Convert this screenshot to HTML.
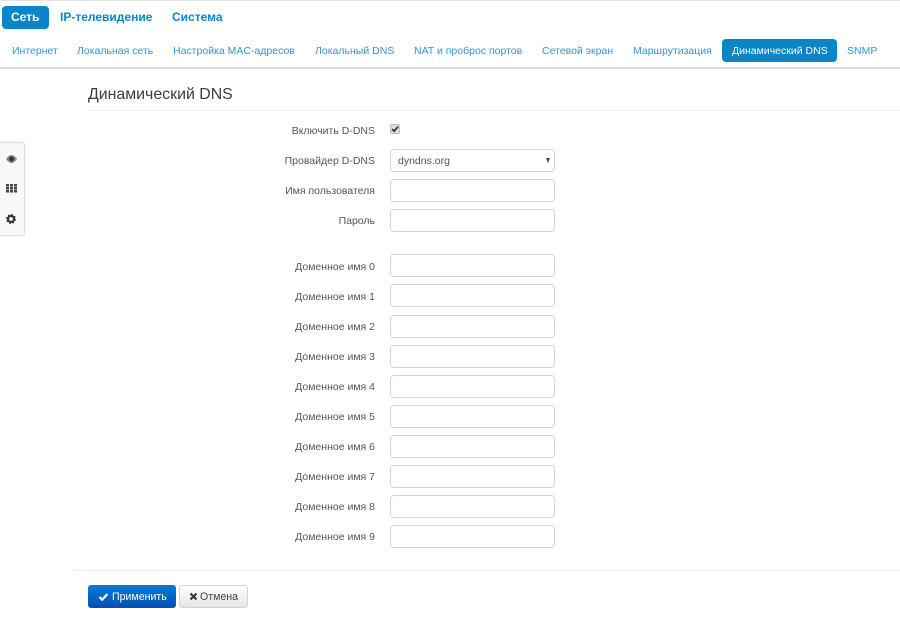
<!DOCTYPE html>
<html><head><meta charset="utf-8">
<style>
html,body{margin:0;padding:0;background:#fff;width:900px;height:626px;overflow:hidden;font-family:"Liberation Sans",sans-serif}
.a{position:absolute;white-space:nowrap}
.top{top:2px;height:22px;line-height:30px;font-size:12px;font-weight:bold;color:#0a85c7}
.sub{top:39px;line-height:25px;font-size:10.5px;color:#3a93cd}
.lb{left:230px;width:145px;text-align:right;font-size:10.5px;color:#555;line-height:20px}
.in{left:390px;width:163px;height:21px;border:1px solid #d6d6d6;border-radius:4px;background:#fff}
</style></head><body>
<div class="a" style="left:0;top:0;width:900px;height:1px;background:#e4e4e4"></div>
<div class="a" style="left:2px;top:6px;width:47px;height:23px;background:#0a85c7;border-radius:4px"></div>
<div class="a top" style="left:11px;top:2px;color:#fff">Сеть</div>
<div class="a top" style="left:60px">IP-телевидение</div>
<div class="a top" style="left:172px">Система</div>

<div class="a sub" style="left:12px">Интернет</div>
<div class="a sub" style="left:77px">Локальная сеть</div>
<div class="a sub" style="left:173px">Настройка MAC-адресов</div>
<div class="a sub" style="left:315px">Локальный DNS</div>
<div class="a sub" style="left:414px">NAT и проброс портов</div>
<div class="a sub" style="left:542px">Сетевой экран</div>
<div class="a sub" style="left:633px">Маршрутизация</div>
<div class="a" style="left:722px;top:39px;width:115px;height:23px;background:#0a85c7;border-radius:4px"></div>
<div class="a sub" style="left:732px;color:#fff">Динамический DNS</div>
<div class="a sub" style="left:847px">SNMP</div>
<div class="a" style="left:0;top:67px;width:900px;height:2px;background:#dedede"></div>

<div class="a" style="left:88px;top:84px;font-size:15.9px;line-height:22px;color:#3c3c3c">Динамический DNS</div>
<div class="a" style="left:88px;top:110px;width:812px;height:1px;background:#eee"></div>

<div class="a" style="left:0;top:142px;width:24px;height:92px;background:#f8f8f8;border:1px solid #e0e0e0;border-left:0;border-radius:0 3px 3px 0;box-shadow:0 0 2px rgba(0,0,0,.1)"></div>
<svg class="a" style="left:5px;top:153px" width="13" height="72" viewBox="0 0 13 72">
<path d="M1 6C3 3 5 2 6.500 2S10 3 12 6C10 9 8 10 6.500 10S3 9 1 6Z" fill="#8a8a8a"/><circle cx="6.500" cy="6" r="2.500" fill="#333"/>
<g fill="#444"><rect x="1" y="31" width="3" height="2.500"/><rect x="5" y="31" width="3" height="2.500"/><rect x="9" y="31" width="3" height="2.500"/><rect x="1" y="34" width="3" height="2.500"/><rect x="5" y="34" width="3" height="2.500"/><rect x="9" y="34" width="3" height="2.500"/><rect x="1" y="37" width="3" height="2.500"/><rect x="5" y="37" width="3" height="2.500"/><rect x="9" y="37" width="3" height="2.500"/></g>
<circle cx="6" cy="66" r="3" fill="none" stroke="#333" stroke-width="2.200"/>
<circle cx="6" cy="66" r="4.300" fill="none" stroke="#333" stroke-width="1.300" stroke-dasharray="1.700 1.700"/>
</svg>

<div class="a lb" style="top:121px">Включить D-DNS</div>
<div class="a" style="left:390px;top:124px;width:8px;height:8px;background:#ddd;border:1px solid #bbb;border-radius:2px"></div>
<svg class="a" style="left:390px;top:124px" width="10" height="10" viewBox="0 0 10 10"><path d="M2.200 5L4.200 7.200L8 2.600" fill="none" stroke="#333" stroke-width="1.700"/></svg>

<div class="a lb" style="top:151px">Провайдер D-DNS</div>
<div class="a in" style="top:149px"></div>
<div class="a" style="left:398px;top:151px;font-size:10.5px;line-height:20px;color:#555">dyndns.org</div>
<div class="a" style="left:546px;top:158px;width:0;height:0;border-left:2.500px solid transparent;border-right:2.500px solid transparent;border-top:5px solid #444"></div>

<div class="a lb" style="top:181px">Имя пользователя</div><div class="a in" style="top:179px"></div>
<div class="a lb" style="top:211px">Пароль</div><div class="a in" style="top:209px"></div>

<div class="a lb" style="top:257px">Доменное имя 0</div><div class="a in" style="top:254px"></div>
<div class="a lb" style="top:287px">Доменное имя 1</div><div class="a in" style="top:284px"></div>
<div class="a lb" style="top:317px">Доменное имя 2</div><div class="a in" style="top:315px"></div>
<div class="a lb" style="top:347px">Доменное имя 3</div><div class="a in" style="top:345px"></div>
<div class="a lb" style="top:377px">Доменное имя 4</div><div class="a in" style="top:375px"></div>
<div class="a lb" style="top:407px">Доменное имя 5</div><div class="a in" style="top:405px"></div>
<div class="a lb" style="top:437px">Доменное имя 6</div><div class="a in" style="top:435px"></div>
<div class="a lb" style="top:467px">Доменное имя 7</div><div class="a in" style="top:465px"></div>
<div class="a lb" style="top:497px">Доменное имя 8</div><div class="a in" style="top:495px"></div>
<div class="a lb" style="top:527px">Доменное имя 9</div><div class="a in" style="top:525px"></div>

<div class="a" style="left:74px;top:570px;width:826px;height:1px;background:#eee"></div>

<div class="a" style="left:88px;top:585px;width:88px;height:23px;border-radius:3px;background:linear-gradient(#0a7ad6,#0450b0)"></div>
<svg class="a" style="left:98px;top:592px" width="11" height="11" viewBox="0 0 11 11"><path d="M1.500 5L4.200 7.700L9.500 2" fill="none" stroke="#fff" stroke-width="2.200"/></svg>
<div class="a" style="left:112px;top:587px;font-size:10.6px;line-height:20px;color:#fff">Применить</div>

<div class="a" style="left:179px;top:585px;width:67px;height:21px;border:1px solid #d5d5d5;border-radius:3px;background:linear-gradient(#fff,#e6e6e6)"></div>
<svg class="a" style="left:189px;top:592px" width="9" height="9" viewBox="0 0 9 9"><path d="M1.500 1.500L7.500 7.500M7.500 1.500L1.500 7.500" stroke="#333" stroke-width="2.100"/></svg>
<div class="a" style="left:200px;top:587px;font-size:10.6px;line-height:20px;color:#444">Отмена</div>
</body></html>
